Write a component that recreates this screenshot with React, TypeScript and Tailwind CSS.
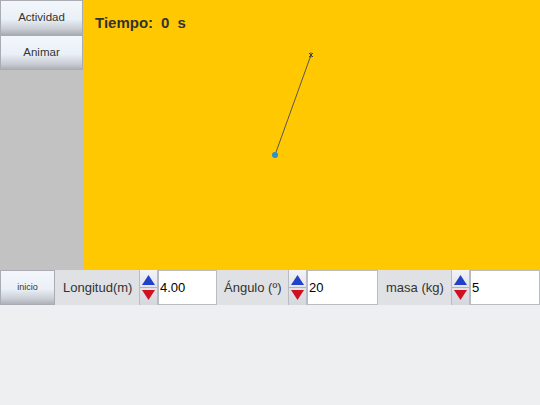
import React from "react";

const btn =
  "bg-[linear-gradient(to_bottom,#f3f7fc_0%,#eaf0f7_55%,#c9cdd3_85%,#aeb2b8_100%)] border border-[#a9adb3] text-[#333]";

function Spinner() {
  return (
    <div className="w-[19px] h-full flex flex-col bg-[linear-gradient(to_bottom,#f1f3f6,#d4d7db)] border-x border-[#b9bcc0]">
      <div className="flex-1 flex items-end justify-center pb-[2px]">
        <svg width="13" height="10" viewBox="0 0 13 10">
          <polygon points="6.5,0 13,10 0,10" fill="#2340c8" />
        </svg>
      </div>
      <div className="h-px bg-[#b0b3b8]" />
      <div className="flex-1 flex items-start justify-center pt-[2px]">
        <svg width="13" height="10" viewBox="0 0 13 10">
          <polygon points="0,0 13,0 6.5,10" fill="#d01020" />
        </svg>
      </div>
    </div>
  );
}

export default function App() {
  return (
    <div className="w-[540px] h-[405px] bg-[#eeeff1] flex flex-col font-['Liberation_Sans',Arial,sans-serif] overflow-hidden">
      <div className="flex h-[270px]">
        <div className="w-[83px] bg-[#c2c2c2] flex flex-col">
          <button className={`h-[35px] text-[11.5px] ${btn}`}>Actividad</button>
          <button className={`h-[35px] text-[11.5px] ${btn}`}>Animar</button>
        </div>
        <div className="flex-1 bg-[#ffc800] relative">
          <div className="absolute left-[12px] top-[12px] text-[15px] font-bold text-[#333] flex gap-[8px]">
            <span>Tiempo:</span>
            <span>0</span>
            <span>s</span>
          </div>
          <svg className="absolute inset-0" width="457" height="270">
            <line x1="228" y1="55" x2="192" y2="155" stroke="#555" strokeWidth="1" />
            <path d="M226 53 L230 57 M230 53 L226 57 M228 52.5 L228 57.5" stroke="#444" strokeWidth="1" />
            <circle cx="192" cy="155" r="3" fill="#2b8fd6" />
          </svg>
        </div>
      </div>
      <div className="h-[35px] flex bg-[#dfe1e4] text-[13px] text-[#333]">
        <button className={`w-[55px] h-full text-[9px] ${btn}`}>inicio</button>
        <div className="w-[84px] flex items-center pl-[8px]">Longitud(m)</div>
        <Spinner />
        <div className="w-[59px] bg-white border border-[#b9bcc0] flex items-center pl-[1px] text-[13px] text-black">4.00</div>
        <div className="w-[71px] flex items-center pl-[7px]">Ángulo (º)</div>
        <Spinner />
        <div className="w-[71px] bg-white border border-[#b9bcc0] flex items-center pl-[1px] text-black">20</div>
        <div className="w-[73px] flex items-center pl-[8px]">masa (kg)</div>
        <Spinner />
        <div className="flex-1 bg-white border border-[#b9bcc0] flex items-center pl-[1px] text-black">5</div>
      </div>
    </div>
  );
}
